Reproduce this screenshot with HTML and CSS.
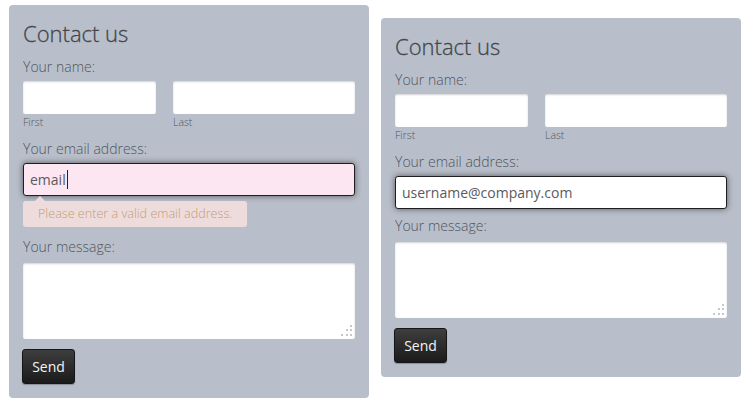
FILE: index.html
```html
<!DOCTYPE html>
<html lang="en">
<head>
<meta charset="utf-8">
<title>Contact us</title>
<link rel="stylesheet" href="styles.css">
</head>
<body>
<div class="page">
  <form class="card card-left">
    <h2 class="title">Contact us</h2>
    <div class="label">Your name:</div>
    <div class="name-row">
      <div class="name-col first">
        <div class="field"></div>
        <div class="sub">First</div>
      </div>
      <div class="name-col last">
        <div class="field"></div>
        <div class="sub">Last</div>
      </div>
    </div>
    <div class="label gap">Your email address:</div>
    <div class="field focus invalid"><span class="val">email</span><span class="caret"></span></div>
    <div class="tip">Please enter a valid email address.</div>
    <div class="label after-tip">Your message:</div>
    <div class="field area">
      <svg class="grip" width="12" height="12" viewBox="0 0 12 12"><rect x="9" y="0" width="2" height="2"/><rect x="9" y="4" width="2" height="2"/><rect x="5" y="4" width="2" height="2"/><rect x="9" y="9" width="2" height="2"/><rect x="5" y="9" width="2" height="2"/><rect x="0" y="9" width="2" height="2"/></svg>
    </div>
    <div class="btn">Send</div>
  </form>

  <form class="card card-right">
    <h2 class="title">Contact us</h2>
    <div class="label">Your name:</div>
    <div class="name-row">
      <div class="name-col first">
        <div class="field"></div>
        <div class="sub">First</div>
      </div>
      <div class="name-col last">
        <div class="field"></div>
        <div class="sub">Last</div>
      </div>
    </div>
    <div class="label gap">Your email address:</div>
    <div class="field focus"><span class="val">username@company.com</span></div>
    <div class="label msg">Your message:</div>
    <div class="field area">
      <svg class="grip" width="12" height="12" viewBox="0 0 12 12"><rect x="9" y="0" width="2" height="2"/><rect x="9" y="4" width="2" height="2"/><rect x="5" y="4" width="2" height="2"/><rect x="9" y="9" width="2" height="2"/><rect x="5" y="9" width="2" height="2"/><rect x="0" y="9" width="2" height="2"/></svg>
    </div>
    <div class="btn">Send</div>
  </form>
</div>
</body>
</html>
```

FILE: styles.css
```css
* { box-sizing: border-box; }
html, body { margin: 0; padding: 0; background: #ffffff; }
body { font-family: "Open Sans", "Liberation Sans", sans-serif; color: #555; }

.page {
  display: flex;
  align-items: flex-start;
  padding-left: 9px;
  gap: 12px;
}

.card {
  width: 360px;
  background: #b9bfca;
  border-radius: 4px;
  padding: 13px 14px 14px 14px;
  display: flex;
  flex-direction: column;
  align-items: stretch;
}
.card-left { margin-top: 5px; }
.card-right { margin-top: 18px; }

.title {
  margin: 0 0 10px 0;
  font-size: 22px;
  line-height: 30px;
  font-weight: 300;
  color: #43474d;
  -webkit-text-stroke: 0.3px #43474d;
}

.label {
  font-size: 14px;
  line-height: 18px;
  font-weight: 300;
  color: #50555d;
  margin-bottom: 5px;
}
.label.gap { margin-top: 11px; }
.label.msg { margin-top: 8px; }
.label.after-tip { margin-top: 11px; }

.name-row {
  display: flex;
  gap: 17px;
}
.name-col.first { width: 133px; }
.name-col.last { flex: 1; }

.field {
  height: 33px;
  background: #ffffff;
  border-radius: 2px;
  box-shadow: inset 0 1px 2px rgba(0, 0, 0, 0.18);
  position: relative;
  display: flex;
  align-items: center;
  padding-left: 6px;
  font-size: 14px;
  font-weight: 400;
  color: #5a5a5e;
}
.field.focus {
  border: 1px solid #1e1e22;
  border-radius: 3px;
  box-shadow: 0 0 6px rgba(0, 0, 0, 0.55);
}
.field.invalid { background: #fce6f1; }
.caret {
  display: inline-block;
  width: 1px;
  height: 19px;
  background: #222;
  margin-left: 1px;
}

.sub {
  font-size: 10.5px;
  line-height: 14px;
  font-weight: 300;
  color: #50555d;
  margin-top: 1px;
}

.tip {
  position: relative;
  align-self: flex-start;
  margin-top: 5px;
  width: 224px;
  height: 26px;
  background: #eedcdd;
  border-radius: 3px;
  padding-left: 15px;
  font-size: 12.6px;
  line-height: 26px;
  font-weight: 300;
  color: #c29c72;
}
.tip::before {
  content: "";
  position: absolute;
  left: 12px;
  top: -5px;
  border-left: 5px solid transparent;
  border-right: 5px solid transparent;
  border-bottom: 5px solid #eedcdd;
}

.field.area {
  height: 76px;
  margin-top: 2px;
}
.grip {
  position: absolute;
  right: 2px;
  bottom: 2px;
  fill: #c4c7cc;
}

.btn {
  align-self: flex-start;
  margin-top: 10px;
  margin-left: -1px;
  width: 53px;
  height: 35px;
  border: 1px solid #161616;
  border-radius: 3px;
  background: linear-gradient(#3e3e3e, #1b1b1b);
  box-shadow: 0 1px 1px rgba(0, 0, 0, 0.25);
  color: #f4f4f4;
  font-size: 14px;
  line-height: 33px;
  text-align: center;
}
```
